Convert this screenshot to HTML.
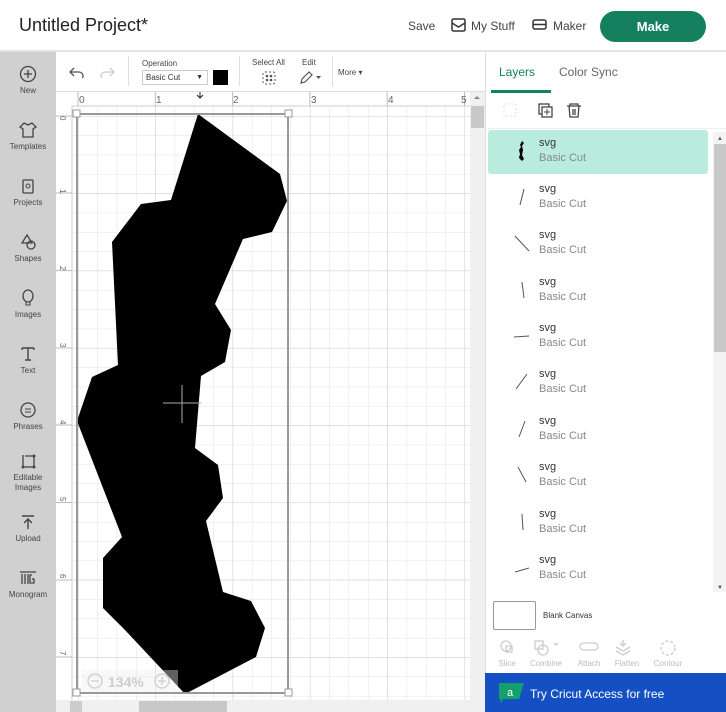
<!DOCTYPE html>
<html><head><meta charset="utf-8"><style>
*{margin:0;padding:0;box-sizing:border-box}
body{width:726px;height:712px;overflow:hidden;background:#fff;font-family:"Liberation Sans",sans-serif;position:relative;color:#333}
.abs{position:absolute}
.hdr{left:0;top:0;width:726px;height:52px;border-bottom:2px solid #e4e4e4;background:#fff}
.side{left:0;top:52px;width:56px;height:660px;background:#d0d0d0}
.si{position:absolute;left:0;width:56px;text-align:center;font-size:8px;color:#444;line-height:10px}
.si svg{display:block;margin:0 auto 3px}
.lay{position:absolute;left:488px;width:220px;height:44px}
.lay .t{position:absolute;left:51px;top:7px;font-size:11px;color:#333}
.lay .s{position:absolute;left:51px;top:22px;font-size:11px;color:#888}
.tool{position:absolute;top:638px;font-size:8px;color:#bbb;text-align:center;width:40px}
</style></head><body>
<div class="abs hdr">
 <div class="abs" style="left:19px;top:15px;font-size:18px;color:#222">Untitled Project*</div>
 <div class="abs" style="left:408px;top:19px;font-size:12px;color:#444">Save</div>
 <svg class="abs" style="left:451px;top:18px" width="15" height="14" viewBox="0 0 15 14"><rect x="1" y="1" width="13" height="12" rx="1.5" fill="none" stroke="#333" stroke-width="1.5"/><path d="M1 5 L7.5 9 L14 5" fill="none" stroke="#333" stroke-width="1.5"/></svg>
 <div class="abs" style="left:471px;top:19px;font-size:12px;color:#444">My Stuff</div>
 <svg class="abs" style="left:532px;top:19px" width="15" height="12" viewBox="0 0 15 12"><rect x="1" y="1" width="13" height="9" rx="2" fill="none" stroke="#333" stroke-width="1.5"/><path d="M1 5.5H14" stroke="#333" stroke-width="1.5"/></svg>
 <div class="abs" style="left:553px;top:19px;font-size:12px;color:#444">Maker</div>
 <div class="abs" style="left:600px;top:11px;width:106px;height:31px;border-radius:16px;background:#14805e;color:#fff;font-weight:bold;font-size:13px;text-align:center;line-height:31px">Make</div>
</div>
<div class="abs side">
 <div class="si" style="top:13px"><svg width="18" height="18"><circle cx="9" cy="9" r="7.5" fill="none" stroke="#444" stroke-width="1.3"/><path d="M9 5v8M5 9h8" stroke="#444" stroke-width="1.3"/></svg>New</div>
 <div class="si" style="top:69px"><svg width="18" height="18"><path d="M5 2l4 2 4-2 4 4-3 2v8H4V8L1 6z" fill="none" stroke="#444" stroke-width="1.3"/></svg>Templates</div>
 <div class="si" style="top:125px"><svg width="18" height="18"><rect x="4" y="3" width="10" height="13" rx="1" fill="none" stroke="#444" stroke-width="1.3"/><circle cx="9" cy="9" r="2" fill="none" stroke="#444"/></svg>Projects</div>
 <div class="si" style="top:181px"><svg width="18" height="18"><path d="M8 2l5 8H3z" fill="none" stroke="#444" stroke-width="1.3"/><circle cx="12" cy="12" r="4" fill="none" stroke="#444" stroke-width="1.3"/></svg>Shapes</div>
 <div class="si" style="top:237px"><svg width="18" height="18"><ellipse cx="9" cy="7" rx="5" ry="6" fill="none" stroke="#444" stroke-width="1.3"/><rect x="7" y="13" width="4" height="3" fill="none" stroke="#444"/></svg>Images</div>
 <div class="si" style="top:293px"><svg width="18" height="18"><path d="M3 3h12M9 3v12M6 15h6M3 3v2M15 3v2" stroke="#444" stroke-width="1.4" fill="none"/></svg>Text</div>
 <div class="si" style="top:349px"><svg width="18" height="18"><circle cx="9" cy="9" r="7" fill="none" stroke="#444" stroke-width="1.3"/><path d="M6 8h6M6 11h6" stroke="#444"/></svg>Phrases</div>
 <div class="si" style="top:400px"><svg width="18" height="18"><path d="M4 3v12h11V4H6" fill="none" stroke="#444" stroke-width="1.3"/><circle cx="4" cy="15" r="1.5" fill="#444"/><circle cx="15" cy="15" r="1.5" fill="#444"/><circle cx="15" cy="4" r="1.5" fill="#444"/></svg>Editable<br>Images</div>
 <div class="si" style="top:461px"><svg width="18" height="18"><path d="M3 3h12M9 6v10M5 10l4-4 4 4" stroke="#444" stroke-width="1.4" fill="none"/></svg>Upload</div>
 <div class="si" style="top:517px"><svg width="20" height="18"><path d="M2 3h16M4 5v10M7 5v10M10 5v10M14 6h-2v8h4v-4h-2" stroke="#444" stroke-width="1.3" fill="none"/></svg>Monogram</div>
</div>
<!-- toolbar -->
<div class="abs" style="left:56px;top:52px;width:429px;height:40px;background:#fff;border-bottom:1px solid #ddd">
 <svg class="abs" style="left:13px;top:14px" width="16" height="12"><path d="M5 2L1 6l4 4M1 6h9a4 4 0 0 1 0 8" fill="none" stroke="#555" stroke-width="1.3"/></svg>
 <svg class="abs" style="left:43px;top:14px" width="16" height="12"><path d="M11 2l4 4-4 4M15 6H6a4 4 0 0 0 0 8" fill="none" stroke="#ccc" stroke-width="1.3"/></svg>
 <div class="abs" style="left:72px;top:4px;width:1px;height:30px;background:#ddd"></div>
 <div class="abs" style="left:86px;top:7px;font-size:8px;color:#444">Operation</div>
 <div class="abs" style="left:86px;top:18px;width:66px;height:15px;border:1px solid #ccc;font-size:8px;line-height:13px;padding-left:3px;color:#333">Basic Cut<span style="position:absolute;right:4px;font-size:7px">▼</span></div>
 <div class="abs" style="left:157px;top:18px;width:15px;height:15px;background:#000"></div>
 <div class="abs" style="left:183px;top:4px;width:1px;height:30px;background:#ddd"></div>
 <div class="abs" style="left:196px;top:6px;font-size:8px;color:#444">Select All</div>
 <svg class="abs" style="left:206px;top:19px" width="14" height="14"><rect x="1" y="1" width="12" height="12" rx="2" fill="none" stroke="#555" stroke-dasharray="2 2"/><circle cx="5" cy="5" r="1.3" fill="#555"/><circle cx="9" cy="5" r="1.3" fill="#555"/><circle cx="5" cy="9" r="1.3" fill="#555"/><circle cx="9" cy="9" r="1.3" fill="#555"/></svg>
 <div class="abs" style="left:246px;top:6px;font-size:8px;color:#444">Edit</div>
 <svg class="abs" style="left:243px;top:18px" width="24" height="14"><path d="M2 13l1-4 7-7 3 3-7 7z" fill="none" stroke="#555" stroke-width="1.2"/><path d="M17 6h5l-2.5 3z" fill="#555"/></svg>
 <div class="abs" style="left:276px;top:4px;width:1px;height:30px;background:#ddd"></div>
 <div class="abs" style="left:282px;top:16px;font-size:8px;color:#444">More ▾</div>
</div>
<!-- canvas -->
<svg class="abs" style="left:56px;top:92px" width="429" height="620" viewBox="56 92 429 620">
 <defs>
  <pattern id="mn" x="78" y="116" width="19.33" height="19.33" patternUnits="userSpaceOnUse"><path d="M0 0H19.33M0 0V19.33" stroke="#e2e2e2" stroke-width="1" fill="none"/></pattern>
  <pattern id="mj" x="78" y="116" width="77.3" height="77.3" patternUnits="userSpaceOnUse"><path d="M0 0H77.3M0 0V77.3" stroke="#cfcfcf" stroke-width="1" fill="none"/></pattern>
 </defs>
 <rect x="56" y="92" width="429" height="620" fill="#fff"/>
 <rect x="72" y="106" width="398" height="594" fill="url(#mn)"/>
 <rect x="72" y="106" width="398" height="594" fill="url(#mj)"/>
 <rect x="56" y="92" width="414" height="14" fill="#fff"/>
 <rect x="56" y="106" width="16" height="594" fill="#fff"/>
 <line x1="72" y1="106" x2="470" y2="106" stroke="#ccc"/>
 <line x1="72" y1="106" x2="72" y2="700" stroke="#ccc"/>
 <g stroke="#bbb">
  <line x1="78" y1="92" x2="78" y2="106"/><line x1="155.3" y1="92" x2="155.3" y2="106"/><line x1="232.6" y1="92" x2="232.6" y2="106"/><line x1="309.9" y1="92" x2="309.9" y2="106"/><line x1="387.2" y1="92" x2="387.2" y2="106"/><line x1="464.5" y1="92" x2="464.5" y2="106"/>
  <line x1="56" y1="116" x2="72" y2="116"/><line x1="56" y1="193" x2="72" y2="193"/><line x1="56" y1="270.6" x2="72" y2="270.6"/><line x1="56" y1="348" x2="72" y2="348"/><line x1="56" y1="425" x2="72" y2="425"/><line x1="56" y1="502.5" x2="72" y2="502.5"/><line x1="56" y1="580" x2="72" y2="580"/><line x1="56" y1="657" x2="72" y2="657"/>
 </g>
 <g font-size="10" fill="#666" font-family="Liberation Sans">
  <text x="79" y="103">0</text><text x="156" y="103">1</text><text x="233" y="103">2</text><text x="311" y="103">3</text><text x="388" y="103">4</text><text x="461" y="103">5</text>
 </g>
 <g font-size="8" fill="#666" font-family="Liberation Sans">
  <text transform="translate(60,116) rotate(90)">0</text><text transform="translate(60,189) rotate(90)">1</text><text transform="translate(60,266) rotate(90)">2</text><text transform="translate(60,343) rotate(90)">3</text><text transform="translate(60,420) rotate(90)">4</text><text transform="translate(60,497) rotate(90)">5</text><text transform="translate(60,574) rotate(90)">6</text><text transform="translate(60,651) rotate(90)">7</text>
 </g>
 <path d="M198 114L280 174L287 201L272 232L243 239L215 304L231 330L225 362L201 376L195 448L218 465L223 498L206 521L223 592L251 601L265 628L256 657L185 694L125 630L103 608L103 558L122 537L77 421L92 377L118 365L112 242L141 204L171 200Z" fill="#000"/>
 <rect x="77" y="114" width="211" height="579" fill="none" stroke="#999" stroke-width="2"/>
 <rect x="73" y="110" width="7" height="7" fill="#fff" stroke="#999"/><rect x="285" y="110" width="7" height="7" fill="#fff" stroke="#999"/>
 <rect x="73" y="689" width="7" height="7" fill="#fff" stroke="#999"/><rect x="285" y="689" width="7" height="7" fill="#fff" stroke="#999"/>
 <path d="M182 385v38M163 403h38" stroke="#aaa" stroke-width="1"/>
 <path d="M200 86v12M197 89l3-3 3 3M197 95l3 3 3-3" stroke="#222" fill="none"/>
 <rect x="82" y="670" width="96" height="22" fill="#eee" opacity=".4"/>
 <circle cx="95" cy="681" r="7" fill="none" stroke="#ccc" stroke-width="1.3"/><path d="M91 681h8" stroke="#ccc" stroke-width="1.3"/>
 <text x="108" y="687" font-size="14" fill="#ccc" font-weight="bold" font-family="Liberation Sans">134%</text>
 <circle cx="162" cy="681" r="7" fill="none" stroke="#ccc" stroke-width="1.3"/><path d="M158 681h8M162 677v8" stroke="#ccc" stroke-width="1.3"/>
 <rect x="470" y="92" width="15" height="608" fill="#f0f0f0"/>
 <rect x="471" y="106" width="13" height="22" fill="#c8c8c8"/>
 <path d="M474 99l3-3 3 3z" fill="#888"/>
 <rect x="56" y="700" width="429" height="12" fill="#f0f0f0"/>
 <rect x="139" y="701" width="88" height="11" fill="#c8c8c8"/>
 <rect x="70" y="701" width="12" height="11" fill="#ccc"/>
</svg>
<!-- right panel -->
<div class="abs" style="left:485px;top:52px;width:241px;height:660px;background:#fff;border-left:1px solid #ddd">
 <div class="abs" style="left:13px;top:13px;font-size:12px;color:#14805e">Layers</div>
 <div class="abs" style="left:73px;top:13px;font-size:12px;color:#666">Color Sync</div>
 <div class="abs" style="left:5px;top:38px;width:60px;height:3px;background:#14805e"></div>
 <svg class="abs" style="left:16px;top:50px" width="100" height="18"><rect x="2" y="2" width="12" height="12" fill="none" stroke="#ddd" stroke-dasharray="2 2"/><rect x="37" y="2" width="10" height="10" fill="none" stroke="#444" stroke-width="1.3"/><rect x="40" y="5" width="10" height="10" fill="#fff" stroke="#444" stroke-width="1.3"/><path d="M45 7v6M42 10h6" stroke="#444"/><path d="M65 4h14M68 4v-2h8v2M67 4l1 11h8l1-11M71 7v6M73 7v6" fill="none" stroke="#444" stroke-width="1.3"/></svg>
 <div class="abs" style="left:0;top:76px;width:241px;height:1px;background:#eee"></div>
 <div class="abs" style="left:227px;top:80px;width:14px;height:460px;background:#f3f3f3"></div>
 <div class="abs" style="left:228px;top:92px;width:12px;height:208px;background:#c8c8c8"></div>
 <div class="abs" style="left:231px;top:84px;font-size:6px;color:#555">▲</div>
 <div class="abs" style="left:231px;top:533px;font-size:6px;color:#555">▼</div>
</div>
<div class="lay" style="top:130px;background:#b9ecdc;border-radius:3px"><svg class="abs" style="left:28px;top:10px" width="10" height="22"><path d="M6 1L4 5 5 7 3 10 4 14 3 18 6 21 8 19 6 15 7 10 6 6 8 3z" fill="#000"/></svg><div class="t">svg</div><div class="s">Basic Cut</div></div>
<div class="lay" style="top:176px"><svg class="abs" style="left:28px;top:10px" width="12" height="22"><path d="M8 3L4 19" stroke="#555"/></svg><div class="t">svg</div><div class="s">Basic Cut</div></div>
<div class="lay" style="top:222px"><svg class="abs" style="left:24px;top:10px" width="20" height="22"><path d="M3 4L17 19" stroke="#555"/></svg><div class="t">svg</div><div class="s">Basic Cut</div></div>
<div class="lay" style="top:269px"><svg class="abs" style="left:30px;top:10px" width="10" height="22"><path d="M4 3L6 19" stroke="#555"/></svg><div class="t">svg</div><div class="s">Basic Cut</div></div>
<div class="lay" style="top:315px"><svg class="abs" style="left:24px;top:10px" width="20" height="22"><path d="M2 12L17 11" stroke="#555"/></svg><div class="t">svg</div><div class="s">Basic Cut</div></div>
<div class="lay" style="top:361px"><svg class="abs" style="left:24px;top:10px" width="20" height="22"><path d="M15 3L4 18" stroke="#555"/></svg><div class="t">svg</div><div class="s">Basic Cut</div></div>
<div class="lay" style="top:408px"><svg class="abs" style="left:28px;top:10px" width="12" height="22"><path d="M9 3L3 19" stroke="#555"/></svg><div class="t">svg</div><div class="s">Basic Cut</div></div>
<div class="lay" style="top:454px"><svg class="abs" style="left:26px;top:10px" width="16" height="22"><path d="M4 3L12 18" stroke="#555"/></svg><div class="t">svg</div><div class="s">Basic Cut</div></div>
<div class="lay" style="top:501px"><svg class="abs" style="left:30px;top:10px" width="10" height="22"><path d="M4 3L5 19" stroke="#555"/></svg><div class="t">svg</div><div class="s">Basic Cut</div></div>
<div class="lay" style="top:547px"><svg class="abs" style="left:24px;top:10px" width="20" height="22"><path d="M3 15L17 11" stroke="#555"/></svg><div class="t">svg</div><div class="s">Basic Cut</div></div>
<div class="abs" style="left:493px;top:601px;width:43px;height:29px;border:1px solid #999;border-radius:2px"></div>
<div class="abs" style="left:543px;top:611px;font-size:8px;color:#333">Blank Canvas</div>
<svg class="abs" style="left:496px;top:638px" width="200" height="20"><g fill="none" stroke="#ccc" stroke-width="1.3"><circle cx="10" cy="8" r="5"/><rect x="10" y="8" width="6" height="6"/><rect x="39" y="3" width="8" height="8"/><circle cx="47" cy="12" r="5"/><path d="M58 5l2 2 2-2"/><rect x="84" y="5" width="18" height="7" rx="3.5"/><path d="M127 2v6M124 5l3 3 3-3M120 9l7 4 7-4M120 13l7 4 7-4"/><circle cx="172" cy="10" r="7" stroke-dasharray="3 2"/></g></svg>
<div class="tool" style="left:487px;top:659px">Slice</div>
<div class="tool" style="left:526px;top:659px">Combine</div>
<div class="tool" style="left:569px;top:659px">Attach</div>
<div class="tool" style="left:607px;top:659px">Flatten</div>
<div class="tool" style="left:648px;top:659px">Contour</div>
<div class="abs" style="left:485px;top:673px;width:241px;height:39px;background:#1450c4">
 <svg class="abs" style="left:12px;top:10px" width="30" height="20"><path d="M2 0H27L22 16H6L4 20 3 16H2z" fill="#14a06a"/><text x="10" y="13" font-size="11" fill="#fff" font-family="Liberation Sans">a</text></svg>
 <div class="abs" style="left:45px;top:14px;font-size:12px;color:#fff">Try Cricut Access for free</div>
</div>
</body></html>
